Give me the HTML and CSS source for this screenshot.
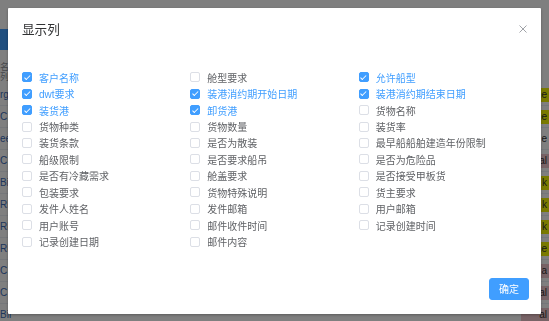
FILE: index.html
```html
<!DOCTYPE html>
<html lang="zh-CN">
<head>
  <meta charset="UTF-8">
  <meta name="viewport" content="width=device-width, initial-scale=1.0">
  <title>显示列</title>
  <link rel="stylesheet" href="styles.css">
</head>
<body>
  <div class="page">
    <div class="toolbar"><span class="btn-search"></span></div>
    <div class="grid-head">名<br>列</div>
    <div class="grid">
      <div class="row"><span class="cell">rg</span><span class="tag tag-yellow">ne</span></div>
      <div class="row"><span class="cell">C</span><span class="tag tag-yellow">ne</span></div>
      <div class="row"><span class="cell">ee</span><span class="tag">e</span></div>
      <div class="row"><span class="cell">C</span><span class="tag tag-pink">al</span></div>
      <div class="row"><span class="cell">Bir</span><span class="tag tag-yellow">k</span></div>
      <div class="row"><span class="cell">Rk</span><span class="tag tag-yellow">k</span></div>
      <div class="row"><span class="cell">Rk</span><span class="tag tag-yellow">k</span></div>
      <div class="row"><span class="cell">Rk</span><span class="tag tag-yellow">ne</span></div>
      <div class="row"><span class="cell">C</span><span class="tag tag-pink">a</span></div>
      <div class="row"><span class="cell">C</span><span class="tag tag-pink">al</span></div>
      <div class="row"><span class="cell">Bir</span><span class="tag tag-pink">al</span></div>
    </div>
  </div>

  <div class="mask"></div>

  <div class="dialog">
    <div class="dialog-header">
      <span class="dialog-title">显示列</span>
      <span class="dialog-close">
        <svg width="8" height="8" viewBox="0 0 8 8"><path d="M0.5 0.5L7.5 7.5M7.5 0.5L0.5 7.5" stroke="#a0a3a8" stroke-width="1" fill="none"/></svg>
      </span>
    </div>
    <div class="dialog-body">
      <div class="columns">
        <label class="check is-checked"><span class="box"></span>客户名称</label>
        <label class="check"><span class="box"></span>舱型要求</label>
        <label class="check is-checked"><span class="box"></span>允许船型</label>

        <label class="check is-checked"><span class="box"></span>dwt要求</label>
        <label class="check is-checked"><span class="box"></span>装港消约期开始日期</label>
        <label class="check is-checked"><span class="box"></span>装港消约期结束日期</label>

        <label class="check is-checked"><span class="box"></span>装货港</label>
        <label class="check is-checked"><span class="box"></span>卸货港</label>
        <label class="check"><span class="box"></span>货物名称</label>

        <label class="check"><span class="box"></span>货物种类</label>
        <label class="check"><span class="box"></span>货物数量</label>
        <label class="check"><span class="box"></span>装货率</label>

        <label class="check"><span class="box"></span>装货条款</label>
        <label class="check"><span class="box"></span>是否为散装</label>
        <label class="check"><span class="box"></span>最早船船舶建造年份限制</label>

        <label class="check"><span class="box"></span>船级限制</label>
        <label class="check"><span class="box"></span>是否要求船吊</label>
        <label class="check"><span class="box"></span>是否为危险品</label>

        <label class="check"><span class="box"></span>是否有冷藏需求</label>
        <label class="check"><span class="box"></span>舱盖要求</label>
        <label class="check"><span class="box"></span>是否接受甲板货</label>

        <label class="check"><span class="box"></span>包装要求</label>
        <label class="check"><span class="box"></span>货物特殊说明</label>
        <label class="check"><span class="box"></span>货主要求</label>

        <label class="check"><span class="box"></span>发件人姓名</label>
        <label class="check"><span class="box"></span>发件邮箱</label>
        <label class="check"><span class="box"></span>用户邮箱</label>

        <label class="check"><span class="box"></span>用户账号</label>
        <label class="check"><span class="box"></span>邮件收件时间</label>
        <label class="check"><span class="box"></span>记录创建时间</label>

        <label class="check"><span class="box"></span>记录创建日期</label>
        <label class="check"><span class="box"></span>邮件内容</label>
      </div>
    </div>
    <div class="dialog-footer">
      <button class="btn-primary">确定</button>
    </div>
  </div>
</body>
</html>
```

FILE: styles.css
```css
body {
  margin: 0;
  font-family: "Liberation Sans", "Noto Sans CJK SC", sans-serif;
  background-color: #fff;
  color: #606266;
  overflow: hidden;
}

/* page under the mask */
.page {
  width: 549px;
  height: 321px;
}
.toolbar {
  padding-top: 29px;
  height: 21px;
}
.btn-search {
  display: inline-block;
  height: 21px;
  width: 60px;
  background-color: #409eff;
}
.grid-head {
  margin-top: 12px;
  font-size: 9px;
  line-height: 10px;
  color: #909399;
  height: 22px;
}
.grid .row {
  display: flex;
  justify-content: space-between;
  align-items: center;
  height: 21px;
  border-bottom: 1px solid #ebeef5;
  font-size: 10px;
}
.cell {
  color: #3a6bb8;
}
.tag {
  display: inline-block;
  width: 26px;
  height: 14px;
  line-height: 14px;
  text-align: right;
  padding-right: 2px;
  color: #333;
}
.tag-yellow {
  background-color: #f5f500;
}
.tag-pink {
  background-color: #f1c6cc;
}

.mask {
  position: fixed;
  inset: 0;
  background-color: rgba(0, 0, 0, 0.5);
}

/* dialog */
.dialog {
  position: fixed;
  top: 8px;
  left: 8px;
  width: 533px;
  background-color: #fff;
  border-radius: 1px;
  box-shadow: 0 1px 3px rgba(0, 0, 0, 0.3);
}
.dialog-header {
  display: flex;
  justify-content: space-between;
  align-items: center;
  padding: 14px 14px 7px;
}
.dialog-title {
  font-size: 12.6px;
  line-height: 17px;
  color: #303133;
}
.dialog-close {
  display: flex;
  margin-top: -3px;
}
.dialog-body {
  padding: 23px 14px 28px;
}
.columns {
  display: grid;
  grid-template-columns: repeat(3, 1fr);
  grid-auto-rows: 16.45px;
}
.check {
  display: flex;
  align-items: center;
  font-size: 10px;
  color: #606266;
  white-space: nowrap;
}
.check .box {
  box-sizing: border-box;
  width: 10px;
  height: 10px;
  border: 1px solid #dcdfe6;
  border-radius: 2px;
  background-color: #fff;
  margin-right: 7px;
  position: relative;
}
.check.is-checked {
  color: #409eff;
}
.check.is-checked .box {
  background-color: #409eff;
  border-color: #409eff;
}
.check.is-checked .box::after {
  content: "";
  position: absolute;
  left: 2.6px;
  top: 0.6px;
  width: 2px;
  height: 4.5px;
  border: 1px solid #fff;
  border-left: 0;
  border-top: 0;
  transform: rotate(45deg);
}
.dialog-footer {
  display: flex;
  justify-content: flex-end;
  padding: 0 12px 14px;
}
.btn-primary {
  width: 40px;
  height: 22px;
  padding: 0;
  border: 1px solid #409eff;
  border-radius: 3px;
  background-color: #409eff;
  color: #fff;
  font-family: inherit;
  font-size: 10px;
}
```
